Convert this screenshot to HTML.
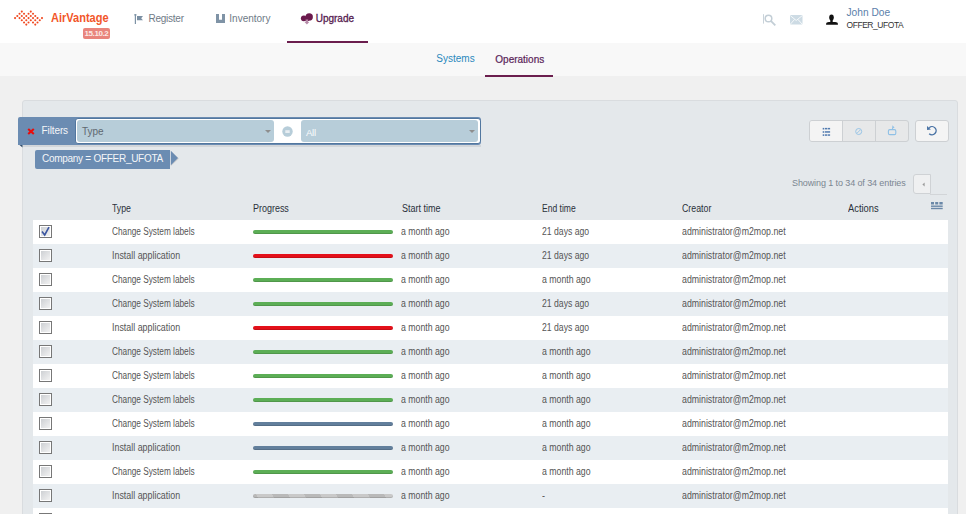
<!DOCTYPE html>
<html><head><meta charset="utf-8">
<style>
*{margin:0;padding:0;box-sizing:border-box}
html,body{width:966px;height:514px;overflow:hidden;background:#f0f0f0;font-family:"Liberation Sans",sans-serif;position:relative}
.a{position:absolute;white-space:nowrap}
#hdr{position:absolute;left:0;top:0;width:966px;height:43px;background:#fff}
#sub{position:absolute;left:0;top:43px;width:966px;height:33px;background:#f8f8f8}
.nav{position:absolute;font-size:10px;color:#6f7a86;line-height:12px;white-space:nowrap}
#panel{position:absolute;left:22px;top:100px;width:936px;height:430px;background:#e4e8eb;border:1px solid #d9dcdf;border-radius:3px}
.row{position:absolute;left:33px;width:915px;height:24px}
.odd{background:#fff}
.even{background:#e9eef2}
.cell{position:absolute;top:0;font-size:10px;line-height:24px;color:#555;white-space:nowrap}
.cell span,.th span{display:inline-block;transform-origin:0 0}
.cb{position:absolute;left:6px;top:5px;width:13px;height:13px;border:1px solid #777;background:linear-gradient(135deg,#c9ccd0,#f6f6f6)}
.cb:after{content:"";position:absolute;left:0;top:0;right:0;bottom:0;border:1px solid #fff}
.ck{position:absolute;left:0;top:0;z-index:2}
.bar{position:absolute;left:220px;top:10px;width:140px;height:4px;border-radius:2px;box-shadow:inset 0 -1px 0 rgba(0,0,0,0.13)}
.g{background:#5cae56}
.r{background:#e4101a}
.b{background:#627f9c}
.s{background:repeating-linear-gradient(58deg,#b9b9b9 0 4.58px,#c9c9c9 4.58px 18.13px,#b9b9b9 18.13px 27.1px)}
.th{position:absolute;top:198.6px;font-size:10px;line-height:20px;color:#2a303a;white-space:nowrap}

</style></head><body>
<div id="hdr"></div>
<svg class="a" style="left:12px;top:7px" width="34" height="22" viewBox="0 0 34 22" fill="#f04a22"><circle cx="3.06" cy="11.10" r="1.05"/><circle cx="5.31" cy="8.94" r="1.05"/><circle cx="7.55" cy="6.78" r="1.05"/><circle cx="9.80" cy="4.61" r="1.05"/><circle cx="7.55" cy="11.10" r="1.05"/><circle cx="9.80" cy="8.94" r="1.05"/><circle cx="12.04" cy="6.78" r="1.05"/><circle cx="9.80" cy="13.27" r="1.05"/><circle cx="12.04" cy="11.10" r="1.05"/><circle cx="14.29" cy="8.94" r="1.05"/><circle cx="12.04" cy="15.43" r="1.05"/><circle cx="14.29" cy="13.27" r="1.05"/><circle cx="16.53" cy="11.10" r="1.05"/><circle cx="18.78" cy="8.94" r="1.05"/><circle cx="16.53" cy="6.78" r="1.05"/><circle cx="18.78" cy="4.61" r="1.05"/><circle cx="14.29" cy="17.59" r="1.05"/><circle cx="16.53" cy="15.43" r="1.05"/><circle cx="18.78" cy="13.27" r="1.05"/><circle cx="21.02" cy="11.10" r="1.05"/><circle cx="21.02" cy="6.78" r="1.05"/><circle cx="23.27" cy="8.94" r="1.05"/><circle cx="25.51" cy="11.10" r="1.05"/><circle cx="21.02" cy="15.43" r="1.05"/><circle cx="23.27" cy="13.27" r="1.05"/><circle cx="25.51" cy="15.43" r="1.05"/><circle cx="27.76" cy="13.27" r="1.05"/><circle cx="30.00" cy="11.10" r="1.05"/><circle cx="23.27" cy="17.59" r="1.05"/></svg>
<div class="a" id="logo" style="left:50.5px;top:11.5px;font-size:12.6px;line-height:12.6px;font-weight:bold;color:#f2562a;transform:scaleX(0.875);transform-origin:0 0">AirVantage</div>
<div class="a" style="left:83px;top:28px;width:27px;height:10.5px;background:#e9847c;border-radius:2px"></div>
<div class="a" style="left:84.5px;top:29px;font-size:8px;line-height:9px;font-weight:bold;color:#fbe9e6;letter-spacing:-0.4px">15.10.2</div>

<svg class="a" style="left:134px;top:13px" width="10" height="12" viewBox="0 0 10 12"><rect x="0.8" y="1.2" width="1.2" height="9.8" fill="#7d92a5"/><rect x="0.3" y="1.2" width="2.2" height="1.3" fill="#7d92a5"/><path d="M3 3.1 H9 L7.2 5.2 L9 7.3 H3 Z" fill="#7a8fa3"/></svg>
<div class="nav" style="left:148.5px;top:14px;font-size:10px;line-height:10px;letter-spacing:-0.25px">Register</div>
<svg class="a" style="left:216px;top:14px" width="9" height="9.2" viewBox="0 0 9 9.2"><path d="M0 0 H3 V5.8 H6 V0 H9 V9.2 H0 Z" fill="#7f93a6"/></svg>
<div class="nav" style="left:229.3px;top:14px;font-size:10px;line-height:10px">Inventory</div>
<svg class="a" style="left:298px;top:10px" width="20" height="17" viewBox="0 0 20 17"><circle cx="5.8" cy="8.3" r="2.9" fill="#6b1a4d"/><circle cx="11.2" cy="6.9" r="3.7" fill="#6b1a4d"/><rect x="5.8" y="7" width="5.5" height="4" fill="#6b1a4d"/><path d="M7.6 9.5 H10.2 V12 H11.3 L8.9 14.5 L6.5 12 H7.6 Z" fill="#b58aa8"/></svg>
<div class="nav" style="left:315.7px;top:14px;font-size:10px;line-height:10px;color:#561c50;-webkit-text-stroke:0.3px #561c50">Upgrade</div>
<div class="a" style="left:287px;top:41.4px;width:81px;height:1.6px;background:#6b1e4e"></div>

<svg class="a" style="left:760px;top:10px" width="20" height="18" viewBox="0 0 20 18"><rect x="3" y="4.2" width="0.9" height="9.4" fill="#c3ced6"/><circle cx="8.5" cy="8.5" r="3.3" stroke="#c3ced6" stroke-width="1.5" fill="none"/><path d="M10.8 10.8 L15.3 15.3" stroke="#c3ced6" stroke-width="1.8"/></svg>
<svg class="a" style="left:790px;top:15px" width="12.5" height="10" viewBox="0 0 12.5 10"><rect x="0" y="0" width="12.5" height="9.5" rx="1" fill="#cddbe4"/><path d="M0.5 0.8 L6.25 5.5 L12 0.8 M0.5 9 L4.5 4.5 M12 9 L8 4.5" stroke="#fff" stroke-width="0.8" fill="none"/></svg>
<svg class="a" style="left:822px;top:10px" width="20" height="18" viewBox="0 0 20 18"><ellipse cx="9.5" cy="7.6" rx="2.3" ry="3.0" fill="#111"/><rect x="8.3" y="9" width="2.4" height="3.5" fill="#111"/><path d="M4.1 14.8 V13.5 Q4.2 12.1 6.8 11.9 H13.2 Q15.9 12.1 15.9 13.5 V14.8 Z" fill="#111"/></svg>
<div class="nav" style="left:846.5px;top:7.6px;font-size:10.2px;line-height:10.2px;color:#5b80aa">John Doe</div>
<div class="nav" style="left:846.5px;top:20.6px;font-size:8.5px;line-height:8.5px;color:#333;letter-spacing:-0.45px">OFFER_UFOTA</div>

<div id="sub"></div>
<div class="nav" style="left:436.3px;top:53.6px;font-size:10px;line-height:10px;color:#2a88bd">Systems</div>
<div class="nav" style="left:495.3px;top:54.6px;font-size:10px;line-height:10px;color:#5a2458;-webkit-text-stroke:0.2px #5a2458">Operations</div>
<div class="a" style="left:485px;top:75.3px;width:68px;height:1.6px;background:#6b1e4e"></div>

<div id="panel"></div>
<div class="a" style="left:23px;top:145px;width:458px;height:1.5px;background:#d2d6da"></div>
<div class="a" style="left:18px;top:117px;width:463px;height:28px;background:#6b8cb2;border-radius:2px 3px 3px 0"></div>
<svg class="a" style="left:19px;top:145px" width="4" height="3" viewBox="0 0 4 3"><path d="M0.5 0 H3.5 V2.5 Z" fill="#34506e"/></svg>
<svg class="a" style="left:27px;top:127.5px" width="8" height="7" viewBox="0 0 8 7"><path d="M1.2 1 L6.8 6 M6.8 1 L1.2 6" stroke="#e80c0c" stroke-width="2.1"/></svg>
<div class="a" style="left:41.5px;top:125.5px;font-size:10px;line-height:10px;color:#f4f6f8;letter-spacing:-0.1px">Filters</div>
<div class="a" style="left:75px;top:117.6px;width:406px;height:26.6px;background:#fff;border:1px solid #52779f;border-radius:3px"></div>
<div class="a" style="left:77px;top:120px;width:197px;height:22px;background:#b7cdd9;border-radius:3px"></div>
<div class="a" style="left:82px;top:127px;font-size:10px;line-height:10px;color:#5f6870">Type</div>
<svg class="a" style="left:265px;top:129.5px" width="6" height="3" viewBox="0 0 6 3"><path d="M0 0 H6 L3 3 Z" fill="#8e8e8e"/></svg>
<svg class="a" style="left:282px;top:126px" width="11" height="11" viewBox="0 0 11 11"><circle cx="5.5" cy="5.5" r="5.2" fill="#b7cdd9"/><rect x="3.3" y="4.2" width="4.4" height="2.8" fill="#e8eef2"/></svg>
<div class="a" style="left:301px;top:120px;width:177px;height:22px;background:#b7cdd9;border-radius:3px"></div>
<div class="a" style="left:306px;top:127.5px;font-size:9.6px;line-height:10px;color:#fafcfd;letter-spacing:-0.3px">All</div>
<svg class="a" style="left:468.5px;top:130px" width="6" height="3" viewBox="0 0 6 3"><path d="M0 0 H6 L3 3 Z" fill="#8e8e8e"/></svg>

<div class="a" style="left:35px;top:150px;width:135px;height:19px;background:#6b8cb2;border-radius:2px 0 0 2px"></div>
<svg class="a" style="left:170px;top:150px" width="10" height="18" viewBox="0 0 10 18"><path d="M1 1.3 L9 8.6 L1 16 Z" fill="#cfcfcf"/><path d="M0.8 0.8 L8 8 L0.8 15.2 Z" fill="#6b8cb2"/></svg>
<div class="a" style="left:42px;top:154px;font-size:10px;line-height:10px;color:#f4f6f8;letter-spacing:-0.28px">Company = OFFER_UFOTA</div>

<div class="a" style="left:809px;top:120px;width:100px;height:22px;border:1px solid #cdd0d3;border-radius:3px;background:#e7e8e9;overflow:hidden"><div style="position:absolute;left:0;top:0;width:33px;height:20px;background:#f4f4f4;border-right:1px solid #cdd0d3"></div><div style="position:absolute;left:65px;top:0;width:1px;height:20px;background:#cdd0d3"></div></div>
<svg class="a" style="left:822px;top:127px" width="10" height="10" viewBox="0 0 10 10" fill="#527bb0"><rect x="0.7" y="0.9" width="1.6" height="1.6"/><rect x="3.0" y="0.9" width="2.3" height="1.5"/><rect x="5.8" y="0.9" width="2.3" height="1.5"/><rect x="0.7" y="4.2" width="1.6" height="1.6"/><rect x="3.0" y="4.2" width="5.1" height="1.5"/><rect x="0.7" y="7.3" width="1.6" height="1.6"/><rect x="3.0" y="7.3" width="2.3" height="1.5"/><rect x="5.8" y="7.3" width="2.3" height="1.5"/></svg>
<svg class="a" style="left:853px;top:125px" width="12" height="12" viewBox="0 0 12 12"><circle cx="5.7" cy="6.5" r="3" stroke="#98c4e6" stroke-width="1" fill="none"/><path d="M4.2 8 L7.2 5" stroke="#98c4e6" stroke-width="0.9"/></svg>
<svg class="a" style="left:886px;top:124px" width="12" height="12" viewBox="0 0 12 12"><rect x="2.4" y="5.6" width="7.4" height="5" rx="1.4" stroke="#8fc0e6" stroke-width="1.1" fill="none"/><path d="M6.3 1.2 L8.6 3.6 L6.4 4.4 Z" fill="#8fc0e6"/><path d="M6.6 3.5 V6" stroke="#8fc0e6" stroke-width="1"/></svg>
<div class="a" style="left:915px;top:120px;width:34px;height:22px;border:1px solid #cdd0d3;border-radius:3px;background:#f4f4f4"></div>
<svg class="a" style="left:920px;top:120px" width="24" height="22" viewBox="0 0 24 22"><path d="M9.26 7.65 A4.1 4.1 0 1 1 9.2 13.7" stroke="#4670a3" stroke-width="1.4" fill="none"/><path d="M7 5.9 L7.1 10 L10.9 9.5 Z" fill="#4670a3"/></svg>

<div class="a" style="left:792px;top:178px;font-size:9px;line-height:10px;color:#7b8691;letter-spacing:-0.1px">Showing 1 to 34 of 34 entries</div>
<div class="a" style="left:930px;top:194px;width:17px;height:1px;background:#d2d5d8"></div>
<div class="a" style="left:913px;top:174px;width:18px;height:20px;border:1px solid #cfd2d5;border-radius:3px 0 0 3px;background:#eff0f1"></div>
<svg class="a" style="left:921.5px;top:181.5px" width="4" height="5" viewBox="0 0 4 5"><path d="M2.6 0.6 L0.4 2.5 L2.6 4.4 Z" fill="#9a9a9a"/></svg>
<svg class="a" style="left:931px;top:202px" width="12" height="9" viewBox="0 0 12 9" fill="#6a88a8"><rect x="0" y="0" width="3" height="2.5"/><rect x="4.2" y="0" width="3" height="2.5"/><rect x="8.4" y="0" width="3.3" height="2.5"/><rect x="0" y="3.5" width="11.7" height="1.4"/><rect x="0" y="5.8" width="11.7" height="1.4"/></svg>
<div class="th" style="left:112px"><span style="transform:scaleX(0.876)">Type</span></div>
<div class="th" style="left:253px"><span style="transform:scaleX(0.896)">Progress</span></div>
<div class="th" style="left:402px"><span style="transform:scaleX(0.9)">Start time</span></div>
<div class="th" style="left:542px"><span style="transform:scaleX(0.853)">End time</span></div>
<div class="th" style="left:682px"><span style="transform:scaleX(0.88)">Creator</span></div>
<div class="th" style="left:848px"><span style="transform:scaleX(0.935)">Actions</span></div>
<div class="row odd" style="top:220px"><div class="cb"><svg class="ck" width="11" height="11" viewBox="0 0 11 11"><path d="M2 5.5 L4.7 9 L9 1.2" stroke="#3a55a0" stroke-width="1.6" fill="none"/></svg></div><div class="cell" style="left:79px"><span style="transform:scaleX(0.826)">Change System labels</span></div><div class="bar g"></div><div class="cell" style="left:368px"><span style="transform:scaleX(0.874)">a month ago</span></div><div class="cell" style="left:509px"><span style="transform:scaleX(0.866)">21 days ago</span></div><div class="cell" style="left:649px"><span style="transform:scaleX(0.878)">administrator@m2mop.net</span></div></div>
<div class="row even" style="top:244px"><div class="cb"></div><div class="cell" style="left:79px"><span style="transform:scaleX(0.888)">Install application</span></div><div class="bar r"></div><div class="cell" style="left:368px"><span style="transform:scaleX(0.874)">a month ago</span></div><div class="cell" style="left:509px"><span style="transform:scaleX(0.866)">21 days ago</span></div><div class="cell" style="left:649px"><span style="transform:scaleX(0.878)">administrator@m2mop.net</span></div></div>
<div class="row odd" style="top:268px"><div class="cb"></div><div class="cell" style="left:79px"><span style="transform:scaleX(0.826)">Change System labels</span></div><div class="bar g"></div><div class="cell" style="left:368px"><span style="transform:scaleX(0.874)">a month ago</span></div><div class="cell" style="left:509px"><span style="transform:scaleX(0.874)">a month ago</span></div><div class="cell" style="left:649px"><span style="transform:scaleX(0.878)">administrator@m2mop.net</span></div></div>
<div class="row even" style="top:292px"><div class="cb"></div><div class="cell" style="left:79px"><span style="transform:scaleX(0.826)">Change System labels</span></div><div class="bar g"></div><div class="cell" style="left:368px"><span style="transform:scaleX(0.874)">a month ago</span></div><div class="cell" style="left:509px"><span style="transform:scaleX(0.866)">21 days ago</span></div><div class="cell" style="left:649px"><span style="transform:scaleX(0.878)">administrator@m2mop.net</span></div></div>
<div class="row odd" style="top:316px"><div class="cb"></div><div class="cell" style="left:79px"><span style="transform:scaleX(0.888)">Install application</span></div><div class="bar r"></div><div class="cell" style="left:368px"><span style="transform:scaleX(0.874)">a month ago</span></div><div class="cell" style="left:509px"><span style="transform:scaleX(0.866)">21 days ago</span></div><div class="cell" style="left:649px"><span style="transform:scaleX(0.878)">administrator@m2mop.net</span></div></div>
<div class="row even" style="top:340px"><div class="cb"></div><div class="cell" style="left:79px"><span style="transform:scaleX(0.826)">Change System labels</span></div><div class="bar g"></div><div class="cell" style="left:368px"><span style="transform:scaleX(0.874)">a month ago</span></div><div class="cell" style="left:509px"><span style="transform:scaleX(0.874)">a month ago</span></div><div class="cell" style="left:649px"><span style="transform:scaleX(0.878)">administrator@m2mop.net</span></div></div>
<div class="row odd" style="top:364px"><div class="cb"></div><div class="cell" style="left:79px"><span style="transform:scaleX(0.826)">Change System labels</span></div><div class="bar g"></div><div class="cell" style="left:368px"><span style="transform:scaleX(0.874)">a month ago</span></div><div class="cell" style="left:509px"><span style="transform:scaleX(0.874)">a month ago</span></div><div class="cell" style="left:649px"><span style="transform:scaleX(0.878)">administrator@m2mop.net</span></div></div>
<div class="row even" style="top:388px"><div class="cb"></div><div class="cell" style="left:79px"><span style="transform:scaleX(0.826)">Change System labels</span></div><div class="bar g"></div><div class="cell" style="left:368px"><span style="transform:scaleX(0.874)">a month ago</span></div><div class="cell" style="left:509px"><span style="transform:scaleX(0.874)">a month ago</span></div><div class="cell" style="left:649px"><span style="transform:scaleX(0.878)">administrator@m2mop.net</span></div></div>
<div class="row odd" style="top:412px"><div class="cb"></div><div class="cell" style="left:79px"><span style="transform:scaleX(0.826)">Change System labels</span></div><div class="bar b"></div><div class="cell" style="left:368px"><span style="transform:scaleX(0.874)">a month ago</span></div><div class="cell" style="left:509px"><span style="transform:scaleX(0.874)">a month ago</span></div><div class="cell" style="left:649px"><span style="transform:scaleX(0.878)">administrator@m2mop.net</span></div></div>
<div class="row even" style="top:436px"><div class="cb"></div><div class="cell" style="left:79px"><span style="transform:scaleX(0.888)">Install application</span></div><div class="bar b"></div><div class="cell" style="left:368px"><span style="transform:scaleX(0.874)">a month ago</span></div><div class="cell" style="left:509px"><span style="transform:scaleX(0.874)">a month ago</span></div><div class="cell" style="left:649px"><span style="transform:scaleX(0.878)">administrator@m2mop.net</span></div></div>
<div class="row odd" style="top:460px"><div class="cb"></div><div class="cell" style="left:79px"><span style="transform:scaleX(0.826)">Change System labels</span></div><div class="bar g"></div><div class="cell" style="left:368px"><span style="transform:scaleX(0.874)">a month ago</span></div><div class="cell" style="left:509px"><span style="transform:scaleX(0.874)">a month ago</span></div><div class="cell" style="left:649px"><span style="transform:scaleX(0.878)">administrator@m2mop.net</span></div></div>
<div class="row even" style="top:484px"><div class="cb"></div><div class="cell" style="left:79px"><span style="transform:scaleX(0.888)">Install application</span></div><div class="bar s"></div><div class="cell" style="left:368px"><span style="transform:scaleX(0.874)">a month ago</span></div><div class="cell" style="left:509px"><span style="transform:scaleX(0.9)">-</span></div><div class="cell" style="left:649px"><span style="transform:scaleX(0.878)">administrator@m2mop.net</span></div></div>
<div class="row odd" style="top:508px"><div class="cb"></div><div class="cell" style="left:79px"><span style="transform:scaleX(0.826)">Change System labels</span></div><div class="bar g"></div><div class="cell" style="left:368px"><span style="transform:scaleX(0.874)">a month ago</span></div><div class="cell" style="left:509px"><span style="transform:scaleX(0.874)">a month ago</span></div><div class="cell" style="left:649px"><span style="transform:scaleX(0.878)">administrator@m2mop.net</span></div></div>

</body></html>
